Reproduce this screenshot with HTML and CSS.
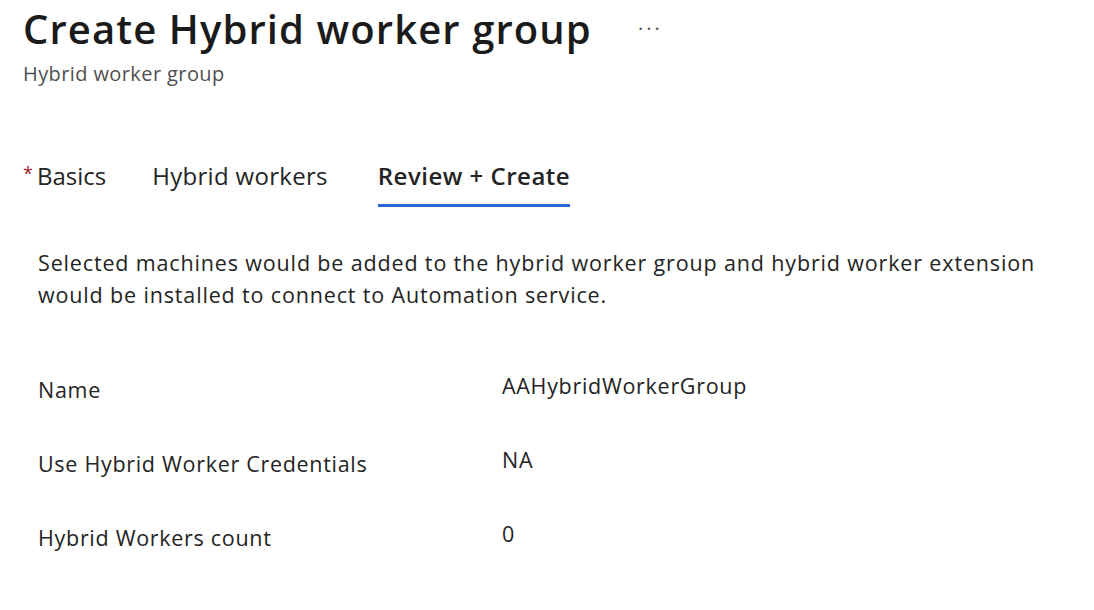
FILE: index.html
```html
<!DOCTYPE html>
<html lang="en">
<head>
<meta charset="utf-8">
<title>Create Hybrid worker group</title>
<link rel="stylesheet" href="styles.css">
</head>
<body>
<div class="page">
  <header class="header">
    <div class="title-row">
      <h1 class="title">Create Hybrid worker group</h1>
      <span class="more">&middot;&middot;&middot;</span>
    </div>
    <div class="subtitle">Hybrid worker group</div>
  </header>

  <nav class="tabs">
    <div class="tab basics"><span class="req">*</span>Basics</div>
    <div class="tab">Hybrid workers</div>
    <div class="tab active">Review + Create</div>
  </nav>

  <section class="content">
    <p class="desc">Selected machines would be added to the hybrid worker group and hybrid worker extension would be installed to connect to Automation service.</p>
    <div class="summary">
      <div class="row">
        <div class="label">Name</div>
        <div class="value">AAHybridWorkerGroup</div>
      </div>
      <div class="row">
        <div class="label">Use Hybrid Worker Credentials</div>
        <div class="value">NA</div>
      </div>
      <div class="row">
        <div class="label">Hybrid Workers count</div>
        <div class="value">0</div>
      </div>
    </div>
  </section>
</div>
</body>
</html>
```
FILE: styles.css
```css
html, body {
  margin: 0;
  padding: 0;
  background: #ffffff;
}
body {
  font-family: "Open Sans", "Noto Sans", sans-serif;
  color: #242424;
}
.page {
  padding: 0 0 0 23px;
  display: flex;
  flex-direction: column;
}
.header {
  display: flex;
  flex-direction: column;
}
.title-row {
  display: flex;
  align-items: flex-start;
  gap: 46px;
  height: 58px;
}
.title {
  margin: 0;
  font-size: 40px;
  font-weight: 600;
  color: #1b1b1b;
  line-height: 58px;
  letter-spacing: 1.1px;
}
.more {
  font-size: 20px;
  line-height: 57px;
  color: #555;
  letter-spacing: 3px;
}
.subtitle {
  font-size: 20px;
  color: #505050;
  line-height: 26px;
  margin-top: 3px;
  letter-spacing: 0.4px;
}
.tabs {
  display: flex;
  gap: 46px;
  margin-top: 71px;
}
.tab {
  font-size: 24px;
  line-height: 36px;
  color: #242424;
  padding-bottom: 10px;
  border-bottom: 3px solid transparent;
  letter-spacing: 0.3px;
}
.tab.basics {
  letter-spacing: 0;
}
.tab.active {
  font-weight: 600;
  letter-spacing: 0.5px;
  margin-left: 4px;
  border-bottom-color: #2b68d3;
}
.req {
  color: #a4262c;
  font-size: 18px;
  vertical-align: top;
  line-height: 30px;
  margin-right: 4px;
}
.content {
  padding-left: 15px;
  display: flex;
  flex-direction: column;
}
.desc {
  margin: 40px 0 0 0;
  font-size: 21.5px;
  line-height: 32px;
  letter-spacing: 0.85px;
  max-width: 1010px;
  color: #242424;
}
.summary {
  display: flex;
  flex-direction: column;
  margin-top: 60px;
}
.row {
  display: grid;
  grid-template-columns: 464px 1fr;
  height: 74px;
  align-items: start;
}
.label {
  font-size: 21.5px;
  line-height: 30px;
  letter-spacing: 0.7px;
  padding-top: 4px;
}
.value {
  font-size: 21.5px;
  line-height: 30px;
  letter-spacing: 0.7px;
}
```
